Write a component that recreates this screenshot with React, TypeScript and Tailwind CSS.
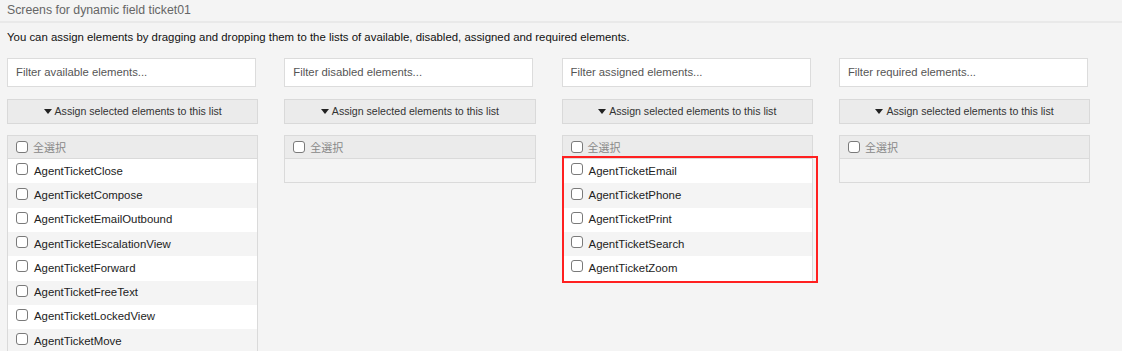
import React from 'react'

const COLUMNS = [
  { filter: 'Filter available elements...', items: [
    'AgentTicketClose',
    'AgentTicketCompose',
    'AgentTicketEmailOutbound',
    'AgentTicketEscalationView',
    'AgentTicketForward',
    'AgentTicketFreeText',
    'AgentTicketLockedView',
    'AgentTicketMove',
  ] },
  { filter: 'Filter disabled elements...', items: [] },
  { filter: 'Filter assigned elements...', items: [
    'AgentTicketEmail',
    'AgentTicketPhone',
    'AgentTicketPrint',
    'AgentTicketSearch',
    'AgentTicketZoom',
  ], highlight: true },
  { filter: 'Filter required elements...', items: [] },
]

function Check() {
  return (
    <span className="inline-block w-[12px] h-[12px] shrink-0 rounded-[3px] border border-[#7a7a7a] bg-white" />
  )
}

function Column({ filter, items, highlight }: { filter: string; items: string[]; highlight?: boolean }) {
  return (
    <div className="w-[277.3px] shrink-0 pr-[26px]">
      <div className="w-[249px] h-[29px] bg-white border border-[#dcdcdc] flex items-center px-[8px] text-[11.3px] text-[#555]">
        {filter}
      </div>

      <div className="mt-[12px] h-[25px] bg-[#ebebeb] border border-[#d9d9d9] flex items-center justify-center text-[10.6px] text-[#333]">
        <svg width="8" height="5" viewBox="0 0 8 5" className="mr-[3px]">
          <path d="M0 0h8L4 5z" fill="#222" />
        </svg>
        Assign selected elements to this list
      </div>

      <div className="mt-[11px] border border-[#dadada]">
        <div className="h-[23px] bg-[#ebebeb] border-b border-[#dadada] flex items-center pl-[8px] gap-[5px] text-[11px] text-[#888]">
          <Check />
          <span className="leading-none" style={{ fontFamily: '"Noto Sans CJK JP", sans-serif' }}>全選択</span>
        </div>
        <div className="relative">
          {items.length === 0 && <div className="h-[23px]" />}
          {items.map((item, i) => (
            <div
              key={item}
              className={
                'h-[24.3px] flex items-center pl-[8px] gap-[6px] text-[11.4px] text-[#222] ' +
                (i % 2 === 0 ? 'bg-white' : 'bg-[#f4f4f4]')
              }
            >
              <span className="-mt-[4px] flex"><Check /></span>
              {item}
            </div>
          ))}
          {highlight && (
            <div className="absolute -top-[3px] -bottom-[2px] -left-[1px] -right-[6px] border-2 border-[#ff2020] pointer-events-none" />
          )}
        </div>
      </div>
    </div>
  )
}

export default function App() {
  return (
    <div
      className="w-[1122px] h-[351px] overflow-hidden bg-[#f4f4f4]"
      style={{ fontFamily: '"Liberation Sans", Arial, sans-serif' }}
    >
      <div className="h-[23px] px-[7px] flex items-center text-[12.3px] text-[#666] border-b-2 border-[#e9e9e9]">
        Screens for dynamic field ticket01
      </div>
      <p className="px-[7px] mt-[6px] text-[11.4px] text-[#111]">
        You can assign elements by dragging and dropping them to the lists of available, disabled, assigned and required elements.
      </p>
      <div className="flex px-[7px] mt-[12px]">
        {COLUMNS.map((c) => (
          <Column key={c.filter} filter={c.filter} items={c.items} highlight={c.highlight} />
        ))}
      </div>
    </div>
  )
}
